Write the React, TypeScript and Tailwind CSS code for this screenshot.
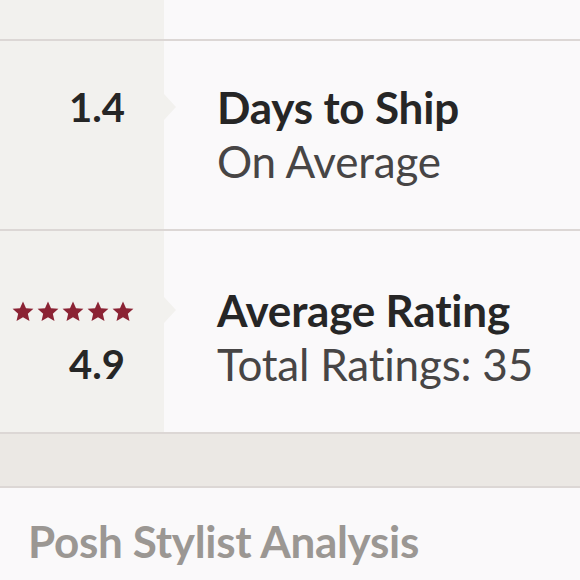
import React from 'react';

const font = { fontFamily: 'Lato, "Open Sans", sans-serif' };

function Star() {
  return (
    <svg width="22" height="21" viewBox="0 0 24 23" className="fill-[#8b2334]">
      <path d="M12 0.5l3.3 7.4 8.1 0.7-6.1 5.4 1.8 8L12 17.9l-7.1 4.1 1.8-8-6.1-5.4 8.1-0.7z" />
    </svg>
  );
}

function StatRow({ top, bottom, title, subtitle, pad }: {
  top: React.ReactNode;
  bottom?: React.ReactNode;
  title: string;
  subtitle: string;
  pad: string;
}) {
  return (
    <div className="flex border-b-2 border-[#dcd7d5]">
      <div className={`relative w-[164px] shrink-0 bg-[#f2f1ee] flex flex-col items-end pr-[39px] pb-[41px] ${pad}`}>
        <div className="relative h-[54px] flex items-center justify-end w-full">
          {top}
          <span className="absolute right-[-51px] top-1/2 -translate-y-1/2 w-0 h-0 border-y-[13px] border-y-transparent border-l-[12px] border-l-[#f2f1ee]" />
        </div>
        <div className="h-[54px] flex items-center">{bottom}</div>
      </div>
      <div className={`flex-1 bg-[#faf9fa] flex flex-col pl-[53px] pb-[41px] ${pad}`}>
        <div className="text-[44px] font-bold text-[#262626] leading-[54px] tracking-[-0.2px]">{title}</div>
        <div className="text-[44px] text-[#474545] leading-[54px] tracking-[-0.2px]">{subtitle}</div>
      </div>
    </div>
  );
}

export default function App() {
  return (
    <div className="w-[580px] h-[580px] overflow-hidden bg-[#faf9fa]" style={font}>
      {/* top sliver */}
      <div className="flex h-[41px] border-b-2 border-[#dcd7d5]">
        <div className="w-[164px] bg-[#f2f1ee]" />
        <div className="flex-1 bg-[#faf9fa]" />
      </div>

      <StatRow
        pad="pt-[39px]"
        title="Days to Ship"
        subtitle="On Average"
        top={<div className="text-[40px] font-bold text-[#262626] leading-none">1.4</div>}
      />

      <StatRow
        pad="pt-[52px]"
        title="Average Rating"
        subtitle="Total Ratings: 35"
        top={
          <div className="flex gap-[3px] mr-[-9px] pt-[3px]">
            <Star />
            <Star />
            <Star />
            <Star />
            <Star />
          </div>
        }
        bottom={<div className="text-[40px] font-bold text-[#262626] leading-none">4.9</div>}
      />

      {/* textured band */}
      <div className="h-[54px] bg-[#ebe8e4] border-b-2 border-[#dcd7d5]" />

      <div className="px-[28px] pt-[26px]">
        <div className="text-[44px] font-bold text-[#9b9793] leading-[54px] tracking-[-0.3px]">Posh Stylist Analysis</div>
      </div>
    </div>
  );
}
